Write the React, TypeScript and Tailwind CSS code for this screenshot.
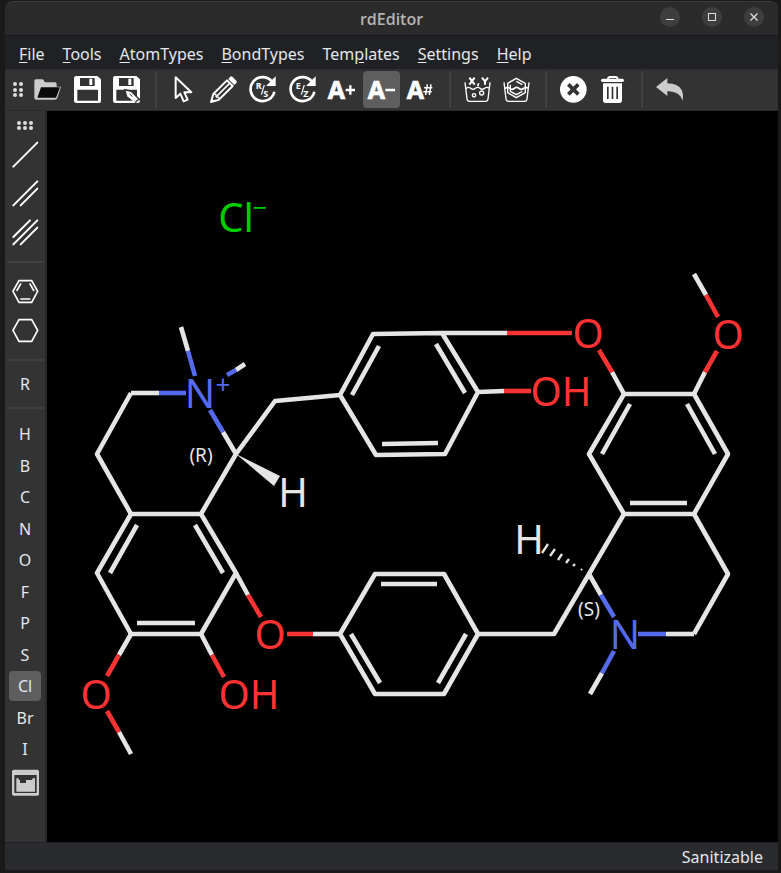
import React, { useState } from "react";

type Pt = [number, number];
const WHITE = "#e5e5e5";
const RED = "#ff3333";
const BLUE = "#556aec";
const GREEN = "#00cc00";

/* ---------- toolbar icons, drawn on an 81 unit grid ---------- */

function Glyph({ children }: { children: React.ReactNode }) {
  return (
    <svg viewBox="0 0 81 81" className="size-[27px] overflow-visible" fill="none" aria-hidden="true">
      {children}
    </svg>
  );
}

const FolderIcon = () => (
  <Glyph>
    <path d="M6 10 H24 Q28 10 30 14 L33 19 H63 Q68 19 68 25 V32 H81 L70 66 Q68 71 62 71 H7 Q1 71 1 65 V16 Q1 10 6 10Z" fill="#cccccc" />
    <path d="M21 34 H78 L66 65 H10Z" fill="#0a0a0a" />
  </Glyph>
);

const floppyPath =
  "M7 0 H70 L81 10 V75 Q81 81 75 81 H7 Q0 81 0 74 V7 Q0 0 7 0Z M18 6 V30 H62 V6Z M10 41 V74 H72 V41Z";

const SaveIcon = () => (
  <Glyph>
    <path fillRule="evenodd" d={floppyPath} fill="#fff" />
    <rect x="46" y="8" width="9" height="19" fill="#fff" />
  </Glyph>
);

const SaveAsIcon = () => (
  <Glyph>
    <path fillRule="evenodd" d={floppyPath} fill="#fff" />
    <rect x="46" y="8" width="9" height="19" fill="#fff" />
    <path d="M32 38 L54 43 L84 72 L73 84 L42 62Z" fill="#333" />
    <path d="M38 44 L54 48 L75 69 L64 79 L43 61Z" fill="#fff" />
    <path d="M50 53 L58 62" stroke="#333" strokeWidth="3" />
    <path d="M78 71 L81 75 Q80 80 74 81 L68 81Z" fill="#fff" />
  </Glyph>
);

const CursorIcon = () => (
  <Glyph>
    <path d="M17 4 V66 L31 53 L41 76 L53 71 L43 49 H64Z" stroke="#fff" strokeWidth="6" strokeLinejoin="round" />
  </Glyph>
);

const PencilIcon = () => (
  <Glyph>
    <path d="M3 78 L10 54 L51 13 L68 30 L27 71Z" stroke="#fff" strokeWidth="6" strokeLinejoin="round" />
    <path d="M18 63 L58 23" stroke="#fff" strokeWidth="5" />
    <path d="M10 54 L18 56 L19 63 L26 64 L27 71" stroke="#fff" strokeWidth="4" />
    <path d="M3 78 L6 68 L13 75Z" fill="#fff" />
    <path d="M55 9 L60 3 Q64 -1 68 3 L79 14 Q82 18 79 21 L73 27Z" fill="#fff" />
  </Glyph>
);

function CycleIcon({ top, bottom }: { top: string; bottom: string }) {
  return (
    <Glyph>
      <path d="M69 17 A36 36 0 1 0 76 47" stroke="#fff" strokeWidth="8" />
      <path d="M80 1 V30 H51Z" fill="#fff" />
      <path d="M46 27 L37 56" stroke="#fff" strokeWidth="3.5" />
      <text x="20" y="39" fontSize="27" fontWeight="700" fill="#fff">{top}</text>
      <text x="43" y="63" fontSize="27" fontWeight="700" fill="#fff">{bottom}</text>
    </Glyph>
  );
}

function LetterIcon({ sign }: { sign: "+" | "-" | "#" }) {
  return (
    <Glyph>
      <text x="-1" y="69" fontSize="75" fontWeight="700" fill="#fff" stroke="#fff" strokeWidth="2">A</text>
      {sign === "+" && <path d="M53 42 H81 M67 28 V56" stroke="#fff" strokeWidth="7" />}
      {sign === "-" && <path d="M52 42 H81" stroke="#fff" strokeWidth="7" />}
      {sign === "#" && <path d="M51 35 H76 M49 47 H74 M61 25 L56 57 M72 25 L67 57" stroke="#fff" strokeWidth="4.5" />}
    </Glyph>
  );
}

const tub = "M3 19 L9 69 Q10 76 17 76 H65 Q71 76 72 69 L78 19";

const CoordsBathIcon = () => (
  <Glyph>
    <path d={tub} stroke="#fff" strokeWidth="4" />
    <path d="M6 38 Q13 31 20 37 T34 37 T48 37 T62 37 T75 37" stroke="#fff" strokeWidth="4" />
    <circle cx="30" cy="58" r="5" stroke="#fff" strokeWidth="4" />
    <circle cx="53" cy="51" r="6" stroke="#fff" strokeWidth="4" />
    <path d="M16 5 L32 26 M32 5 L16 26 M54 5 L63 16 L72 5 M63 16 V26" stroke="#fff" strokeWidth="6" />
    <path d="M44 22 L41 31" stroke="#fff" strokeWidth="5" />
  </Glyph>
);

const RingBathIcon = () => (
  <Glyph>
    <path d={tub} stroke="#fff" strokeWidth="4" />
    <path d="M40 7 L67 22 V50 L40 65 L14 50 V22Z" stroke="#fff" strokeWidth="4" />
    <path d="M40 16 L58 26 M22 26 V46 L40 56 L58 46" stroke="#fff" strokeWidth="4" />
    <path d="M6 38 Q13 31 20 37 T34 37 T48 37 T62 37 T75 37" stroke="#fff" strokeWidth="5" />
  </Glyph>
);

const CancelIcon = () => (
  <Glyph>
    <circle cx="40" cy="40" r="40" fill="#fff" />
    <path d="M25 25 L55 55 M55 25 L25 55" stroke="#333" strokeWidth="11" />
  </Glyph>
);

const TrashIcon = () => (
  <Glyph>
    <path d="M27 9 Q28 3 33 3 H50 Q55 3 56 9" stroke="#fff" strokeWidth="6" />
    <rect x="6" y="8" width="69" height="10" rx="5" fill="#fff" />
    <path fillRule="evenodd" d="M12 22 H69 V73 Q69 81 61 81 H20 Q12 81 12 73Z M24 32 V69 H29 V32Z M38 32 V69 H43 V32Z M52 32 V69 H57 V32Z" fill="#fff" />
  </Glyph>
);

const UndoIcon = () => (
  <Glyph>
    <path d="M0 33 L34 6 V22 Q66 22 77 42 Q84 56 79 75 Q74 47 34 46 V60Z" fill="#cccccc" />
  </Glyph>
);

/* ---------- side bar icons ---------- */

function BondIcon({ order }: { order: 1 | 2 | 3 }) {
  return (
    <Glyph>
      <g stroke="#fff" strokeWidth="6" strokeLinecap="round">
        {order === 1 && <path d="M4 77 L76 5" />}
        {order === 2 && <path d="M4 76 L76 4 M26 76 L76 26" />}
        {order === 3 && <path d="M4 76 L76 4 M26 76 L76 26 M4 54 L54 4" />}
      </g>
    </Glyph>
  );
}

function RingIcon({ aromatic }: { aromatic?: boolean }) {
  return (
    <Glyph>
      <path d="M21 8 H59 L77 40 L59 73 H21 L3 40Z" stroke="#fff" strokeWidth="5" />
      {aromatic && <path d="M27 16 L14 39 M53 16 L66 39 M25 63 H55" stroke="#fff" strokeWidth="5" />}
    </Glyph>
  );
}

const PeriodicIcon = () => (
  <Glyph>
    <path fillRule="evenodd" d="M6 2 H76 Q81 2 81 7 V75 Q81 80 76 80 H6 Q0 80 0 75 V7 Q0 2 6 2Z M7 18 V72 H74 V18Z" fill="#cccccc" />
    <path d="M13 28 H20 V33 H24 V42 H42 V33 H61 V28 H69 V68 H13Z" fill="#cccccc" />
  </Glyph>
);

/* ---------- chrome ---------- */

function Grip({ wide }: { wide?: boolean }) {
  const cols = wide ? [2, 8, 14] : [2, 8];
  const rows = wide ? [2, 7] : [2, 8, 13];
  return (
    <svg className={wide ? "h-[9px] w-4" : "h-[15px] w-[10px]"} aria-hidden="true">
      {cols.map((x) => rows.map((y) => <circle key={`${x}-${y}`} cx={x} cy={y} r="2" fill="#dcdde0" />))}
    </svg>
  );
}

function ToolButton({ label, active, onClick, children }: { label: string; active?: boolean; onClick?: () => void; children: React.ReactNode }) {
  return (
    <button
      type="button"
      aria-label={label}
      aria-pressed={active}
      onClick={onClick}
      className={`flex size-[37px] shrink-0 items-center justify-center rounded ${active ? "bg-[#5e5e5e]" : ""}`}
    >
      {children}
    </button>
  );
}

const ToolSep = () => <div className="ml-[10px] mr-2 h-[37px] w-0.5 shrink-0 bg-[#3f4042]" />;
const SideSep = () => <div className="my-[10px] h-0.5 w-[37px] shrink-0 bg-[#3f4042]" />;

function TextButton({ label, active, onClick }: { label: string; active?: boolean; onClick?: () => void }) {
  return (
    <button
      type="button"
      aria-pressed={active}
      onClick={onClick}
      className={`flex h-[30px] w-8 items-center justify-center rounded text-base leading-none text-[#e4e7eb] ${active ? "bg-[#5e5e5e]" : ""}`}
    >
      {label}
    </button>
  );
}

const menus: [string, string, string][] = [
  ["", "F", "ile"],
  ["", "T", "ools"],
  ["", "A", "tomTypes"],
  ["", "B", "ondTypes"],
  ["Tem", "p", "lates"],
  ["", "S", "ettings"],
  ["", "H", "elp"],
];

const elements = ["H", "B", "C", "N", "O", "F", "P", "S", "Cl", "Br", "I"];

/* ---------- molecule ---------- */

const carbonChains: Pt[][] = [
  [[131, 393], [97, 454], [131, 514], [201, 514], [236, 454], [275, 401], [340, 395]],
  [[131, 514], [97, 573], [131, 634], [201, 634], [236, 573], [201, 514]],
  [[340, 395], [373, 334], [442, 333], [478, 392], [445, 454], [376, 455], [340, 395]],
  [[340, 634], [375, 574], [444, 574], [478, 634], [444, 694], [375, 694], [340, 634]],
  [[478, 634], [554, 634], [589, 574], [624, 514]],
  [[624, 394], [694, 394], [728, 454], [694, 514], [624, 514], [589, 454], [624, 394]],
  [[694, 514], [728, 574], [694, 634]],
];

const innerBonds: [Pt, Pt][] = [
  [[137, 525], [110, 573]],
  [[195, 525], [223, 573]],
  [[137, 623], [195, 623]],
  [[379, 346], [352, 395]],
  [[436, 344], [465, 393]],
  [[382, 444], [438, 443]],
  [[381, 584], [437, 584]],
  [[351, 634], [380, 683]],
  [[466, 634], [438, 683]],
  [[630, 404], [602, 454]],
  [[687, 404], [715, 454]],
  [[630, 503], [687, 503]],
];

/* carbon end, colour change, hetero atom end */
const heteroBonds: [Pt, Pt, Pt, string][] = [
  [[131, 393], [159, 393], [186, 393], BLUE],
  [[181, 327], [188, 351], [195, 376], BLUE],
  [[245, 364], [236, 370], [227, 375], BLUE],
  [[236, 454], [223, 432], [210, 410], BLUE],
  [[236, 573], [248, 595], [261, 617], RED],
  [[340, 634], [313, 634], [287, 634], RED],
  [[131, 634], [119, 655], [107, 676], RED],
  [[131, 754], [119, 732], [107, 711], RED],
  [[201, 634], [212, 655], [224, 677], RED],
  [[442, 333], [507, 333], [572, 333], RED],
  [[478, 392], [504, 391], [531, 391], RED],
  [[624, 394], [612, 372], [599, 350], RED],
  [[694, 394], [705, 372], [717, 351], RED],
  [[694, 274], [706, 295], [718, 317], RED],
  [[589, 574], [601, 595], [614, 617], BLUE],
  [[694, 634], [666, 634], [638, 634], BLUE],
  [[590, 694], [602, 673], [614, 651], BLUE],
];

const hashes: [Pt, Pt][] = [
  [[542, 553], [548, 544]],
  [[550, 556], [555, 549]],
  [[558, 560], [562, 554]],
  [[566, 563], [569, 559]],
  [[573, 566], [575, 564]],
  [[581, 570], [582, 569]],
];

const atoms: { t: string; x: number; y: number; fill: string; size?: number }[] = [
  { t: "Cl", x: 236, y: 232, fill: GREEN },
  { t: "−", x: 260, y: 217, fill: GREEN, size: 26 },
  { t: "N", x: 200, y: 408, fill: BLUE },
  { t: "+", x: 223, y: 394, fill: BLUE, size: 26 },
  { t: "H", x: 293, y: 507, fill: WHITE },
  { t: "(R)", x: 201, y: 462, fill: WHITE, size: 19 },
  { t: "O", x: 270, y: 649, fill: RED },
  { t: "O", x: 96, y: 709, fill: RED },
  { t: "OH", x: 249, y: 709, fill: RED },
  { t: "O", x: 588, y: 348, fill: RED },
  { t: "OH", x: 561, y: 406, fill: RED },
  { t: "O", x: 728, y: 349, fill: RED },
  { t: "H", x: 529, y: 554, fill: WHITE },
  { t: "(S)", x: 589, y: 616, fill: WHITE, size: 19 },
  { t: "N", x: 625, y: 649, fill: BLUE },
];

const path = (pts: Pt[]) => "M" + pts.map((p) => p.join(" ")).join(" L");

function Molecule() {
  return (
    <svg viewBox="47 111 731 731" className="block min-w-0 flex-1 bg-black" role="img" aria-label="Molecule drawing">
      <g fill="none" stroke={WHITE} strokeWidth="4.6" strokeLinejoin="round">
        {carbonChains.map((c, i) => <path key={i} d={path(c)} />)}
        {innerBonds.map((c, i) => <path key={i} d={path(c)} />)}
        {heteroBonds.map(([a, m, b, color], i) => (
          <g key={i}>
            <path d={path([a, m])} />
            <path d={path([m, b])} stroke={color} />
          </g>
        ))}
      </g>
      <g stroke={WHITE} strokeWidth="2.3">
        {hashes.map((c, i) => <path key={i} d={path(c)} />)}
      </g>
      <path d="M236 454 L280 476 L274 486Z" fill={WHITE} />
      <g textAnchor="middle">
        {atoms.map((a, i) => (
          <text key={i} x={a.x} y={a.y} fill={a.fill} fontSize={a.size ?? 40}>{a.t}</text>
        ))}
      </g>
    </svg>
  );
}

export default function App() {
  const [tool, setTool] = useState("Decrease charge");
  const [element, setElement] = useState("Cl");
  const pick = (label: string, icon: React.ReactNode) => (
    <ToolButton label={label} active={tool === label} onClick={() => setTool(label)}>{icon}</ToolButton>
  );

  return (
    <div className="flex min-h-screen flex-col bg-[#1a1a1a] pt-px pr-[3px] pb-[3px] pl-[5px] font-['Noto_Sans',sans-serif] text-[#e4e7eb]">
      <div className="flex flex-1 flex-col overflow-hidden rounded-t-lg border-t border-[#3c3c3c] bg-[#202124]">
        <header className="grid h-[34px] grid-cols-[1fr_auto_1fr] items-center border-b border-[#1a1a1a] bg-[#2b2b2b] pr-[14px]">
          <span />
          <h1 className="pl-[14px] font-['Open_Sans',sans-serif] text-base leading-5 font-semibold text-[#b4b4b4]">rdEditor</h1>
          <div className="flex justify-end gap-[22px] pb-1">
            <button type="button" aria-label="Minimize" className="flex size-5 items-center justify-center rounded-full bg-[#3e3e3e]">
              <svg viewBox="0 0 20 20" className="size-5" aria-hidden="true"><path d="M6 12.5 H14" stroke="#ddd" /></svg>
            </button>
            <button type="button" aria-label="Maximize" className="flex size-5 items-center justify-center rounded-full bg-[#3e3e3e]">
              <svg viewBox="0 0 20 20" className="size-5" aria-hidden="true"><rect x="6.5" y="6.5" width="7" height="7" fill="none" stroke="#ddd" /></svg>
            </button>
            <button type="button" aria-label="Close" className="flex size-5 items-center justify-center rounded-full bg-[#3e3e3e]">
              <svg viewBox="0 0 20 20" className="size-5" aria-hidden="true"><path d="M6.5 6.5 L13.5 13.5 M13.5 6.5 L6.5 13.5" stroke="#ddd" strokeWidth="1.3" /></svg>
            </button>
          </div>
        </header>

        <nav className="flex h-[35px] items-center gap-[18px] border-b-2 border-[#2e2f33] pt-0.5 pl-[14px]">
          {menus.map(([pre, key, post]) => (
            <button key={pre + key + post} type="button" className="text-base leading-5">
              {pre}<span className="underline underline-offset-2">{key}</span>{post}
            </button>
          ))}
        </nav>

        <div className="flex h-10 items-center border-b border-[#28292c] bg-[#333333] pb-0.5 pl-2" role="toolbar" aria-label="Main tools">
          <Grip />
          <div className="ml-[6px] flex w-[116px] justify-between">
            <ToolButton label="Open"><FolderIcon /></ToolButton>
            <ToolButton label="Save"><SaveIcon /></ToolButton>
            <ToolButton label="Save as"><SaveAsIcon /></ToolButton>
          </div>
          <ToolSep />
          <div className="flex w-[274px] justify-between">
            {pick("Select", <CursorIcon />)}
            {pick("Draw", <PencilIcon />)}
            {pick("R/S stereo", <CycleIcon top="R" bottom="S" />)}
            {pick("E/Z stereo", <CycleIcon top="E" bottom="Z" />)}
            {pick("Increase charge", <LetterIcon sign="+" />)}
            {pick("Decrease charge", <LetterIcon sign="-" />)}
            {pick("Atom number", <LetterIcon sign="#" />)}
          </div>
          <ToolSep />
          <div className="flex w-[76px] justify-between">
            <ToolButton label="Recalculate coordinates"><CoordsBathIcon /></ToolButton>
            <ToolButton label="Clean up structure"><RingBathIcon /></ToolButton>
          </div>
          <ToolSep />
          <div className="flex w-[76px] justify-between">
            <ToolButton label="Remove"><CancelIcon /></ToolButton>
            <ToolButton label="Clear canvas"><TrashIcon /></ToolButton>
          </div>
          <ToolSep />
          <ToolButton label="Undo"><UndoIcon /></ToolButton>
        </div>

        <main className="flex flex-1">
          <aside className="flex w-[42px] shrink-0 flex-col items-center border-r-2 border-[#28292c] bg-[#333333]" role="toolbar" aria-label="Bonds and atoms">
            <div className="flex h-[25px] shrink-0 items-center pt-1"><Grip wide /></div>
            <div className="flex flex-col gap-0.5">
              <ToolButton label="Single bond"><BondIcon order={1} /></ToolButton>
              <ToolButton label="Double bond"><BondIcon order={2} /></ToolButton>
              <ToolButton label="Triple bond"><BondIcon order={3} /></ToolButton>
            </div>
            <SideSep />
            <div className="flex flex-col gap-0.5">
              <ToolButton label="Benzene"><RingIcon aromatic /></ToolButton>
              <ToolButton label="Cyclohexane"><RingIcon /></ToolButton>
            </div>
            <SideSep />
            <div className="flex h-[26px] items-center"><TextButton label="R" /></div>
            <SideSep />
            <div className="flex h-[345px] flex-col justify-between">
              {elements.map((e) => (
                <TextButton key={e} label={e} active={element === e} onClick={() => setElement(e)} />
              ))}
            </div>
            <ToolButton label="Periodic table"><PeriodicIcon /></ToolButton>
          </aside>
          <Molecule />
        </main>

        <footer className="flex h-7 items-center justify-end border-t border-[#202124] bg-[#2a2b2e] pr-[15px] text-base leading-5">
          <output>Sanitizable</output>
        </footer>
      </div>
    </div>
  );
}
